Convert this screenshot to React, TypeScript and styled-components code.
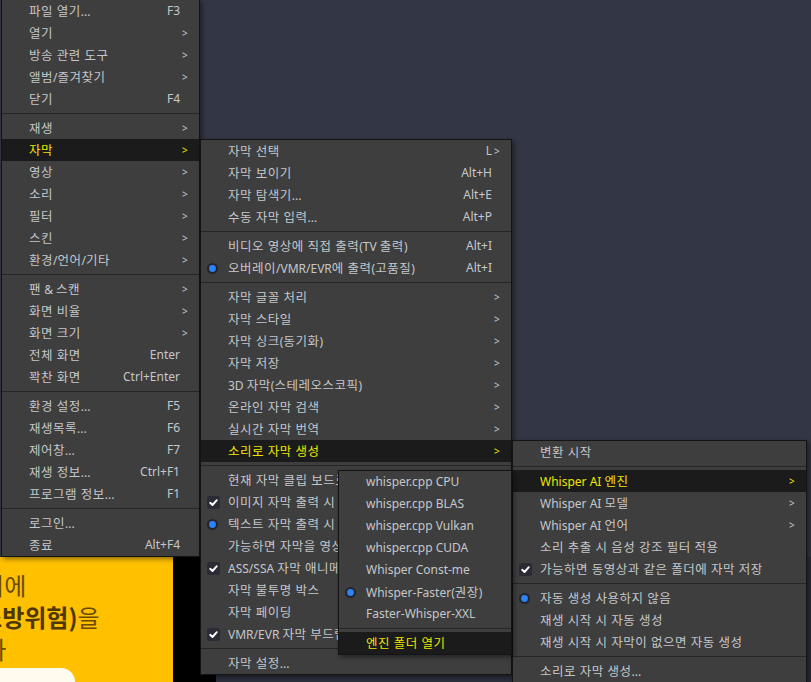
import React from 'react';
import styled, { createGlobalStyle } from 'styled-components';

const GlobalStyle = createGlobalStyle`
  html, body { margin: 0; padding: 0; background: #333745; }
  body { font-family: "Noto Sans", "Noto Sans CJK KR", sans-serif; }
`;

const Screen = styled.div`
  position: relative;
  width: 811px;
  height: 682px;
  overflow: hidden;
  background: #333745;
  display: flex;
  flex-direction: column;
`;

const Workspace = styled.div`
  flex: 1;
`;

const BottomStrip = styled.div`
  height: 125px;
  display: flex;
`;

const Banner = styled.div`
  width: 173px;
  background: #ffc000;
  padding-top: 12px;
  box-sizing: border-box;
  overflow: hidden;
  display: flex;
  flex-direction: column;
  font-family: "Noto Sans CJK KR", sans-serif;
  font-size: 24px;
  line-height: 32px;
  color: #6a4c00;
`;

const BannerLine = styled.div<{ $shift: number }>`
  margin-left: ${(p) => p.$shift}px;
  white-space: nowrap;
`;

const Strong = styled.b`
  font-weight: 700;
  color: #4f3700;
`;

const BannerButton = styled.div`
  margin-top: 3px;
  width: 75px;
  height: 30px;
  background: #fffcef;
  border-top-right-radius: 16px;
`;

const Gap = styled.div`
  width: 43px;
  background: #000;
`;

const Dock = styled.div`
  flex: 1;
  background: #2b2f3c;
`;

const Menu = styled.div<{ $x: number; $y: number; $w: number; $z: number }>`
  position: absolute;
  left: ${(p) => p.$x}px;
  top: ${(p) => p.$y}px;
  width: ${(p) => p.$w}px;
  z-index: ${(p) => p.$z};
  box-sizing: border-box;
  background: #3e3e3e;
  border: 1px solid #141414;
  box-shadow: 2px 2px 5px rgba(0, 0, 0, 0.45);
  display: flex;
  flex-direction: column;
  font-family: "Noto Sans", "Noto Sans CJK KR", sans-serif;
  font-size: 12px;
  color: #c4c7cb;
`;

const Row = styled.div<{ $active?: boolean }>`
  height: 22px;
  display: grid;
  grid-template-columns: 27px 1fr auto 19px;
  align-items: center;
  background: ${(p) => (p.$active ? '#1b1b1b' : 'transparent')};
  color: ${(p) => (p.$active ? '#efe600' : 'inherit')};
  white-space: nowrap;
`;

const IconCell = styled.span`
  display: flex;
  align-items: center;
  padding-left: 6px;
`;

const Label = styled.span`
  overflow: hidden;
  margin-top: -2px;
`;

const Hangul = styled.span`
  font-size: 12.5px;
  letter-spacing: 0.5px;
`;

const Shortcut = styled.span`
  text-align: right;
  margin-top: -2px;
`;

const Arrow = styled.span`
  font-size: 10px;
  padding-left: 2px;
`;

const Separator = styled.div`
  height: 1px;
  background: #262626;
  margin: 3px 0;
`;

const CheckIcon = () => (
  <svg width="13" height="13" viewBox="0 0 13 13">
    <rect width="13" height="13" rx="2.5" fill="#2b2b36" />
    <path d="M3.2 6.8 L5.5 9 L9.8 4.2" fill="none" stroke="#fff" strokeWidth="1.9" strokeLinecap="round" strokeLinejoin="round" />
  </svg>
);

const RadioIcon = () => (
  <svg width="11" height="11" viewBox="0 0 11 11">
    <circle cx="5.5" cy="5.5" r="5.5" fill="#24242e" />
    <circle cx="5.5" cy="5.5" r="3.4" fill="#2e82f2" />
  </svg>
);

const renderText = (s: string) =>
  s.split(/([\uAC00-\uD7A3][\uAC00-\uD7A3 ]*[\uAC00-\uD7A3]|[\uAC00-\uD7A3])/).map((part, i) =>
    /[\uAC00-\uD7A3]/.test(part) ? <Hangul key={i}>{part}</Hangul> : part
  );

type Item =
  | 'sep'
  | { label: string; shortcut?: string; arrow?: boolean; icon?: 'check' | 'radio'; active?: boolean };

const mainMenu: Item[] = [
  { label: '파일 열기...', shortcut: 'F3' },
  { label: '열기', arrow: true },
  { label: '방송 관련 도구', arrow: true },
  { label: '앨범/즐겨찾기', arrow: true },
  { label: '닫기', shortcut: 'F4' },
  'sep',
  { label: '재생', arrow: true },
  { label: '자막', arrow: true, active: true },
  { label: '영상', arrow: true },
  { label: '소리', arrow: true },
  { label: '필터', arrow: true },
  { label: '스킨', arrow: true },
  { label: '환경/언어/기타', arrow: true },
  'sep',
  { label: '팬 & 스캔', arrow: true },
  { label: '화면 비율', arrow: true },
  { label: '화면 크기', arrow: true },
  { label: '전체 화면', shortcut: 'Enter' },
  { label: '꽉찬 화면', shortcut: 'Ctrl+Enter' },
  'sep',
  { label: '환경 설정...', shortcut: 'F5' },
  { label: '재생목록...', shortcut: 'F6' },
  { label: '제어창...', shortcut: 'F7' },
  { label: '재생 정보...', shortcut: 'Ctrl+F1' },
  { label: '프로그램 정보...', shortcut: 'F1' },
  'sep',
  { label: '로그인...' },
  { label: '종료', shortcut: 'Alt+F4' },
];

const subtitleMenu: Item[] = [
  { label: '자막 선택', shortcut: 'L', arrow: true },
  { label: '자막 보이기', shortcut: 'Alt+H' },
  { label: '자막 탐색기...', shortcut: 'Alt+E' },
  { label: '수동 자막 입력...', shortcut: 'Alt+P' },
  'sep',
  { label: '비디오 영상에 직접 출력(TV 출력)', shortcut: 'Alt+I' },
  { label: '오버레이/VMR/EVR에 출력(고품질)', shortcut: 'Alt+I', icon: 'radio' },
  'sep',
  { label: '자막 글꼴 처리', arrow: true },
  { label: '자막 스타일', arrow: true },
  { label: '자막 싱크(동기화)', arrow: true },
  { label: '자막 저장', arrow: true },
  { label: '3D 자막(스테레오스코픽)', arrow: true },
  { label: '온라인 자막 검색', arrow: true },
  { label: '실시간 자막 번역', arrow: true },
  { label: '소리로 자막 생성', arrow: true, active: true },
  'sep',
  { label: '현재 자막 클립 보드로 복사' },
  { label: '이미지 자막 출력 시 부드럽게', icon: 'check' },
  { label: '텍스트 자막 출력 시 외곽선', icon: 'radio' },
  { label: '가능하면 자막을 영상 안에 출력' },
  { label: 'ASS/SSA 자막 애니메이션', icon: 'check' },
  { label: '자막 불투명 박스' },
  { label: '자막 페이딩' },
  { label: 'VMR/EVR 자막 부드럽게', icon: 'check' },
  'sep',
  { label: '자막 설정...' },
];

const soundMenu: Item[] = [
  { label: '변환 시작' },
  'sep',
  { label: 'Whisper AI 엔진', arrow: true, active: true },
  { label: 'Whisper AI 모델', arrow: true },
  { label: 'Whisper AI 언어', arrow: true },
  { label: '소리 추출 시 음성 강조 필터 적용' },
  { label: '가능하면 동영상과 같은 폴더에 자막 저장', icon: 'check' },
  'sep',
  { label: '자동 생성 사용하지 않음', icon: 'radio' },
  { label: '재생 시작 시 자동 생성' },
  { label: '재생 시작 시 자막이 없으면 자동 생성' },
  'sep',
  { label: '소리로 자막 생성...' },
];

const engineMenu: Item[] = [
  { label: 'whisper.cpp CPU' },
  { label: 'whisper.cpp BLAS' },
  { label: 'whisper.cpp Vulkan' },
  { label: 'whisper.cpp CUDA' },
  { label: 'Whisper Const-me' },
  { label: 'Whisper-Faster(권장)', icon: 'radio' },
  { label: 'Faster-Whisper-XXL' },
  'sep',
  { label: '엔진 폴더 열기', active: true },
];

const MenuItems = ({ items }: { items: Item[] }) => (
  <>
    {items.map((it, i) =>
      it === 'sep' ? (
        <Separator key={i} />
      ) : (
        <Row key={i} $active={it.active}>
          <IconCell>
            {it.icon === 'check' && <CheckIcon />}
            {it.icon === 'radio' && <RadioIcon />}
          </IconCell>
          <Label>{renderText(it.label)}</Label>
          <Shortcut>{it.shortcut ?? ''}</Shortcut>
          <Arrow>{it.arrow ? '>' : ''}</Arrow>
        </Row>
      )
    )}
  </>
);

export default function App() {
  return (
    <>
      <GlobalStyle />
      <Screen>
        <Workspace />
        <BottomStrip>
          <Banner>
            <BannerLine $shift={-40}>사이에</BannerLine>
            <BannerLine $shift={-29}>
              <Strong>(소방위험)</Strong>을
            </BannerLine>
            <BannerLine $shift={-60}>습니다</BannerLine>
            <BannerButton />
          </Banner>
          <Gap />
          <Dock />
        </BottomStrip>

        <Menu $x={1} $y={-1} $w={199} $z={1}>
          <MenuItems items={mainMenu} />
        </Menu>
        <Menu $x={200} $y={139} $w={312} $z={2}>
          <MenuItems items={subtitleMenu} />
        </Menu>
        <Menu $x={512} $y={440} $w={295} $z={3}>
          <MenuItems items={soundMenu} />
        </Menu>
        <Menu $x={338} $y={470} $w={174} $z={4}>
          <MenuItems items={engineMenu} />
        </Menu>
      </Screen>
    </>
  );
}
